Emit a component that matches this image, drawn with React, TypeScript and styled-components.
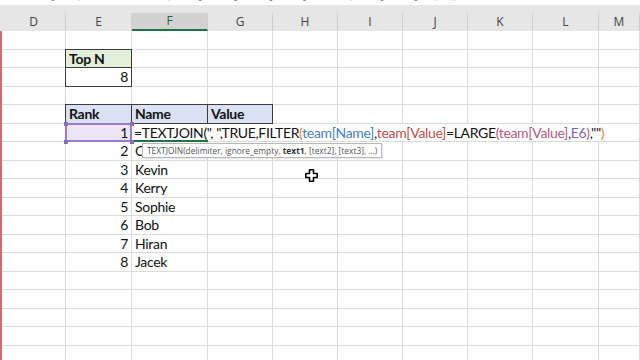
import React from 'react';
import styled, { createGlobalStyle, css } from 'styled-components';

const GlobalStyle = createGlobalStyle`
  html, body { margin: 0; padding: 0; background: #fff; overflow: hidden; }
  #root { width: 640px; height: 360px; }
`;

const COLS = ['D', 'E', 'F', 'G', 'H', 'I', 'J', 'K', 'L', 'M'];
const TEMPLATE = '64px 66px 76px 65px 65px 65px 65px 65px 66px 41px';
const ROW_H = 18.5;
const ROWS = 18;

const Sheet = styled.div`
  position: relative;
  width: 640px;
  height: 360px;
  overflow: hidden;
  background: #fff;
`;

const TopStrip = styled.div`
  height: 5px;
  overflow: hidden;
  background: #fff;
  padding-left: 20px;
`;

const Ghost = styled.div`
  font-family: 'Open Sans', sans-serif;
  font-size: 10.5px;
  line-height: 11px;
  margin-top: -10px;
  color: #777;
  white-space: nowrap;
  letter-spacing: 0.6px;
`;

const HeaderBand = styled.div`
  background: #e6e6e6;
  padding-top: 8px;
  padding-left: 2px;
`;

const HeaderRow = styled.div`
  display: grid;
  grid-template-columns: ${TEMPLATE};
  height: 18px;
`;

const ColHead = styled.div<{ $sel?: boolean }>`
  box-sizing: border-box;
  border-right: 1px solid #cfcfcf;
  font-family: 'Open Sans', sans-serif;
  font-size: 12px;
  line-height: 18px;
  text-align: center;
  color: #444;
  ${(p) =>
    p.$sel &&
    css`
      background: #d2d2d2;
      color: #2b5d44;
      border-bottom: 2px solid #217346;
      line-height: 16px;
    `}
`;

const Grid = styled.div`
  display: grid;
  grid-template-columns: ${TEMPLATE};
  grid-auto-rows: ${ROW_H}px;
  border-left: 2px solid #cf6a6e;
`;

const Cell = styled.div<{ $align?: 'left' | 'right'; $bold?: boolean; $span?: number }>`
  position: relative;
  box-sizing: border-box;
  border-right: 1px solid #dadada;
  border-bottom: 1px solid #dadada;
  font-family: Lato, 'Liberation Sans', sans-serif;
  font-size: 14px;
  letter-spacing: -0.3px;
  line-height: 18.5px;
  color: #111;
  padding: 0 3px 0 3px;
  white-space: nowrap;
  text-align: ${(p) => p.$align ?? 'left'};
  font-weight: ${(p) => (p.$bold ? 700 : 400)};
  grid-column: span ${(p) => p.$span ?? 1};
`;

const TableCell = styled(Cell)<{ $fill?: string }>`
  background: ${(p) => p.$fill ?? '#fff'};
  z-index: 1;
  &::after {
    content: '';
    position: absolute;
    left: -1px;
    top: -1px;
    right: -1px;
    bottom: -1px;
    border: 1px solid #3c3c3c;
    pointer-events: none;
  }
`;

const RefCell = styled(Cell)`
  background: #ece5f5;
  z-index: 2;
  &::after {
    content: '';
    position: absolute;
    left: -1px;
    top: -1px;
    right: -1px;
    bottom: -1px;
    border: 2px solid #9a7cc8;
    pointer-events: none;
  }
`;

const Handle = styled.span<{ $x: 'l' | 'r'; $y: 't' | 'b' }>`
  position: absolute;
  width: 4px;
  height: 4px;
  background: #8d6cc0;
  z-index: 3;
  ${(p) => (p.$x === 'l' ? 'left: -2px;' : 'right: -3px;')}
  ${(p) => (p.$y === 't' ? 'top: -2px;' : 'bottom: -3px;')}
`;

const FormulaCell = styled(Cell)`
  overflow: visible;
  z-index: 1;
  padding-left: 2px;
  letter-spacing: -0.35px;
  &::after {
    content: '';
    position: absolute;
    left: -1px;
    bottom: -1px;
    width: 77px;
    height: 2px;
    background: #217346;
  }
`;

const Tok = styled.span<{ $c?: string }>`
  color: ${(p) => p.$c ?? '#111'};
`;

const Tooltip = styled.div`
  position: absolute;
  left: 142px;
  top: 143px;
  width: 240px;
  height: 15px;
  box-sizing: border-box;
  border: 1px solid #b8b8b8;
  background: #fff;
  font-family: 'Open Sans', sans-serif;
  font-size: 8.4px;
  line-height: 13px;
  color: #555;
  padding: 0 4px;
  white-space: nowrap;
  z-index: 5;
  box-shadow: 1px 1px 1px rgba(0, 0, 0, 0.08);
  b { color: #333; font-weight: 700; }
`;

const Cursor = styled.svg`
  position: absolute;
  left: 305px;
  top: 169px;
  z-index: 6;
`;

const BLUE = '#4a7fc6';
const RED = '#c0504d';
const PURPLE = '#8a62b8';
const MAUVE = '#b3587e';
const ORANGE = '#e07b39';

const names = ['Chris', 'Kevin', 'Kerry', 'Sophie', 'Bob', 'Hiran', 'Jacek'];

function EmptyCells({ from, to }: { from: number; to: number }) {
  return (
    <>
      {COLS.slice(from, to).map((c) => (
        <Cell key={c} />
      ))}
    </>
  );
}

export default function App() {
  const rows: React.ReactNode[] = [];
  for (let r = 0; r < ROWS; r++) {
    let content: React.ReactNode;
    if (r === 1) {
      content = (
        <>
          <Cell />
          <TableCell $bold $fill="#e2efda">Top N</TableCell>
          <EmptyCells from={2} to={10} />
        </>
      );
    } else if (r === 2) {
      content = (
        <>
          <Cell />
          <TableCell $align="right">8</TableCell>
          <EmptyCells from={2} to={10} />
        </>
      );
    } else if (r === 4) {
      content = (
        <>
          <Cell />
          <TableCell $bold $fill="#d9e1f2">Rank</TableCell>
          <TableCell $bold $fill="#d9e1f2">Name</TableCell>
          <TableCell $bold $fill="#d9e1f2">Value</TableCell>
          <EmptyCells from={4} to={10} />
        </>
      );
    } else if (r === 5) {
      content = (
        <>
          <Cell />
          <RefCell $align="right">
            1
            <Handle $x="l" $y="t" />
            <Handle $x="r" $y="t" />
            <Handle $x="l" $y="b" />
            <Handle $x="r" $y="b" />
          </RefCell>
          <FormulaCell $span={8}>
            <Tok>=TEXTJOIN(", ",TRUE,FILTER</Tok>
            <Tok $c={ORANGE}>(</Tok>
            <Tok $c={BLUE}>team[Name]</Tok>
            <Tok>,</Tok>
            <Tok $c={RED}>team[Value]</Tok>
            <Tok>=LARGE</Tok>
            <Tok $c={MAUVE}>(</Tok>
            <Tok $c={MAUVE}>team[Value]</Tok>
            <Tok>,</Tok>
            <Tok $c={PURPLE}>E6</Tok>
            <Tok $c={MAUVE}>)</Tok>
            <Tok>,""</Tok>
            <Tok $c={ORANGE}>)</Tok>
          </FormulaCell>
        </>
      );
    } else if (r >= 6 && r <= 12) {
      content = (
        <>
          <Cell />
          <Cell $align="right">{r - 4}</Cell>
          <Cell>{names[r - 6]}</Cell>
          <EmptyCells from={3} to={10} />
        </>
      );
    } else {
      content = <EmptyCells from={0} to={10} />;
    }
    rows.push(<React.Fragment key={r}>{content}</React.Fragment>);
  }

  return (
    <Sheet>
      <GlobalStyle />
      <TopStrip>
        <Ghost>=TEXTJOIN(", ",TRUE,FILTER(team[Name],team[Value]=LARGE(team[Value],E6),""))</Ghost>
      </TopStrip>
      <HeaderBand>
        <HeaderRow>
          {COLS.map((c) => (
            <ColHead key={c} $sel={c === 'F'}>
              {c}
            </ColHead>
          ))}
        </HeaderRow>
      </HeaderBand>
      <Grid>{rows}</Grid>
      <Tooltip>
        TEXTJOIN(delimiter, ignore_empty, <b>text1</b>, [text2], [text3], ...)
      </Tooltip>
      <Cursor width="13" height="13" viewBox="0 0 13 13">
        <path
          d="M4.5 0.8h4v3.7h3.7v4H8.5v3.7h-4V8.5H0.8v-4h3.7z"
          fill="#fff"
          stroke="#000"
          strokeWidth="1.6"
          strokeLinejoin="round"
        />
      </Cursor>
    </Sheet>
  );
}
